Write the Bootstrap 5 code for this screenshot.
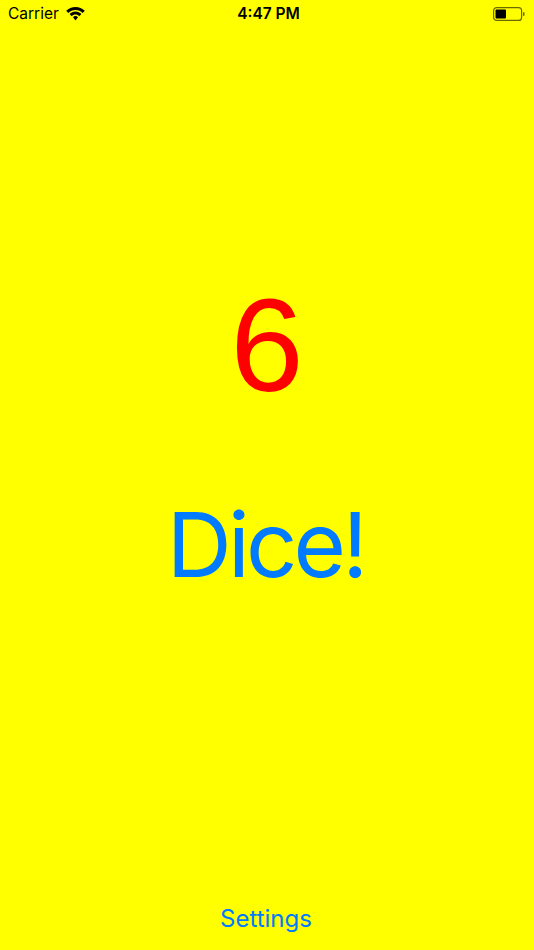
<!DOCTYPE html>
<html lang="en">
<head>
<meta charset="utf-8">
<title>Dice</title>
<link rel="stylesheet" href="https://cdn.jsdelivr.net/npm/bootstrap@5.3.0/dist/css/bootstrap.min.css">
<style>
html, body { margin: 0; height: 100%; }
body { background: #ffff00; font-family: Inter, "Liberation Sans", Arial, sans-serif; overflow: hidden; }
.screen { height: 950px; width: 534px; }
.statusbar { height: 28px; padding: 0 9px 0 8px; color: #000; font-size: 15.5px; }
.statusbar > div { flex: 1 1 0; }
.carrier-group { gap: 7px; }
.clock { font-weight: 600; font-size: 15.5px; padding-left: 4px; }
.diceface { color: #ff0000; font-family: "Liberation Sans", Arial, sans-serif; font-size: 132px; line-height: 152px; margin-top: 242px; }
.dicebtn { color: #007aff; font-size: 90px; font-weight: 400; letter-spacing: -3.8px; line-height: 104px; margin: 71px 3px 0 0; padding: 0; border: 0; background: none; }
.setbtn { color: #007aff; font-size: 24px; line-height: 28px; padding: 0; border: 0; background: none; margin-bottom: 17px; margin-right: 2px; }
</style>
</head>
<body>
<div class="screen d-flex flex-column align-items-center">
  <div class="statusbar d-flex align-items-center w-100">
    <div class="d-flex align-items-center carrier-group">
      <span>Carrier</span>
      <svg width="19" height="14" viewBox="0 0 19 14" aria-hidden="true"><path d="M9.5 0C5.9 0 2.6 1.4 0.2 3.8L2.3 5.9C4.2 4.1 6.7 3 9.5 3S14.8 4.1 16.7 5.9L18.8 3.8C16.4 1.4 13.1 0 9.5 0ZM9.5 4.6C7.2 4.6 5.1 5.5 3.6 7.1L5.7 9.2C6.7 8.2 8 7.6 9.5 7.6S12.3 8.2 13.3 9.2L15.4 7.1C13.9 5.5 11.8 4.6 9.5 4.6ZM9.5 9.1C8.5 9.1 7.6 9.5 7 10.2L9.5 13.6L12 10.2C11.4 9.5 10.5 9.1 9.5 9.1Z" fill="#000"/></svg>
    </div>
    <div class="clock text-center">4:47 PM</div>
    <div class="d-flex justify-content-end">
      <svg width="33" height="14" viewBox="0 0 33 14" aria-hidden="true"><rect x="1.6" y="0.6" width="28" height="12.8" rx="3" fill="none" stroke="#6b6b00" stroke-width="1.2"/><rect x="3.5" y="2.5" width="10.5" height="9" rx="1" fill="#000"/><rect x="31" y="5" width="1.5" height="4" rx=".7" fill="#6b6b00"/></svg>
    </div>
  </div>
  <div class="diceface">6</div>
  <button type="button" class="btn dicebtn">Dice!</button>
  <button type="button" class="btn setbtn mt-auto">Settings</button>
</div>
</body>
</html>
